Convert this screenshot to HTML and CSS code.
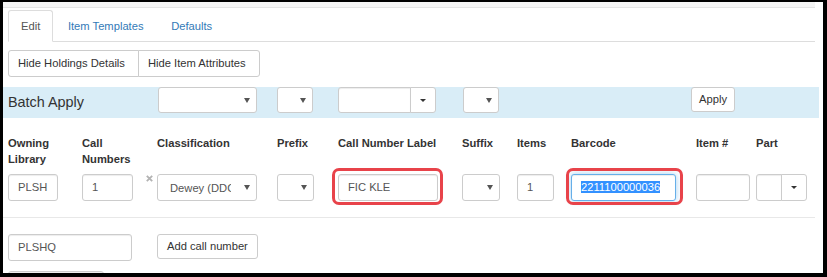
FILE: index.html
```html
<!DOCTYPE html>
<html lang="en">
<head>
<meta charset="utf-8">
<title>Holdings Editor</title>
<link rel="stylesheet" href="styles.css">
</head>
<body>
<div class="frame">
  <div class="topstrip"></div>
  <ul class="tabs">
    <li class="tab active">Edit</li>
    <li class="tab">Item Templates</li>
    <li class="tab">Defaults</li>
  </ul>
  <div class="btn-group">
    <button class="btn btn-first">Hide Holdings Details</button>
    <button class="btn btn-last">Hide Item Attributes</button>
  </div>

  <div class="grid batch">
    <div class="batch-label">Batch Apply</div>
    <div class="sel sel-batch w99 c3"></div>
    <div class="sel sel-batch w36 c4"></div>
    <div class="igroup c5">
      <div class="inp inp-batch w73 ig-left"></div>
      <div class="caret-btn cb-batch"><span class="caret"></span></div>
    </div>
    <div class="sel sel-batch w36 c6"></div>
    <button class="btn apply c9">Apply</button>
  </div>

  <div class="grid header">
    <div class="lbl">Owning Library</div>
    <div class="lbl">Call Numbers</div>
    <div class="lbl">Classification</div>
    <div class="lbl">Prefix</div>
    <div class="lbl">Call Number Label</div>
    <div class="lbl">Suffix</div>
    <div class="lbl">Items</div>
    <div class="lbl">Barcode</div>
    <div class="lbl">Item #</div>
    <div class="lbl">Part</div>
  </div>

  <div class="grid fields">
    <div class="inp w50">PLSH</div>
    <div class="callnum">
      <div class="inp w51">1</div>
      <svg class="remove" width="7" height="7" viewBox="0 0 7 7"><path d="M0.8 0.8L6.2 6.2M6.2 0.8L0.8 6.2" stroke="#b3b3b3" stroke-width="1.8" fill="none"/></svg>
    </div>
    <div class="sel w100"><span class="sel-text">Dewey (DDC)</span></div>
    <div class="sel w37"></div>
    <div class="hl hl-a"><div class="inp w100">FIC KLE</div></div>
    <div class="sel w38"></div>
    <div class="inp w37">1</div>
    <div class="hl hl-b"><div class="inp inp-focus w105"><span class="selected">2211100000036</span></div></div>
    <div class="inp w54"></div>
    <div class="igroup">
      <div class="inp w26 ig-left"></div>
      <div class="caret-btn"><span class="caret"></span></div>
    </div>
  </div>

  <div class="divider"></div>

  <div class="grid bottom">
    <div class="inp w124 span2">PLSHQ</div>
    <button class="btn add">Add call number</button>
  </div>
  <div class="grid last">
    <div class="inp w96 span2"></div>
  </div>
</div>
</body>
</html>
```
FILE: styles.css
```css
html, body {
  margin: 0;
  padding: 0;
}
body {
  background: #000;
  width: 827px;
  height: 277px;
  overflow: hidden;
  font-family: "Liberation Sans", Arial, sans-serif;
  font-size: 11.2px;
  line-height: 16px;
  color: #333;
}
.frame {
  margin: 2px 0 0 3px;
  width: 820px;
  height: 271px;
  background: #fff;
  overflow: hidden;
}
.topstrip {
  width: 812px;
  height: 5px;
  background: #f5f5f5;
  border-bottom: 1px solid #e4e4e4;
}
.tabs {
  display: flex;
  list-style: none;
  margin: 2px 0 0 5px;
  padding: 0;
  width: 807px;
  border-bottom: 1px solid #ddd;
}
.tab {
  margin: 0 1.6px -1px 0;
  padding: 7px 12px;
  line-height: 16px;
  border: 1px solid transparent;
  border-radius: 3px 3px 0 0;
  color: #337ab7;
}
.tab.active {
  color: #555;
  background: #fff;
  border-color: #ddd #ddd transparent;
}
.btn-group {
  display: flex;
  margin: 8px 0 0 5px;
}
.btn {
  box-sizing: border-box;
  height: 27px;
  margin: 0;
  padding: 0 13px 0 9px;
  border: 1px solid #ccc;
  border-radius: 3px;
  background: #fff;
  color: #333;
  font-family: inherit;
  font-size: 11.2px;
  line-height: 25px;
  white-space: nowrap;
}
.btn-first {
  border-radius: 3px 0 0 3px;
}
.btn-last {
  margin-left: -1px;
  border-radius: 0 3px 3px 0;
}
.grid {
  display: grid;
  grid-template-columns: 74px 75px 120px 61px 124px 55px 54px 125px 60px 59px;
  justify-items: start;
  padding-left: 5px;
}
.batch {
  margin-top: 10px;
  width: 811px;
  height: 31px;
  background: #d9edf7;
  align-items: start;
}
.batch-label {
  grid-column: 1 / 3;
  align-self: center;
  font-size: 14.4px;
  line-height: 31px;
  color: #333;
}
.c3 { grid-column: 3; margin-left: 1px; }
.c4 { grid-column: 4; }
.c5 { grid-column: 5; }
.c6 { grid-column: 6; margin-left: 1px; }
.c9 { grid-column: 9; margin-left: -5px; }
.apply {
  width: 44px;
  height: 25px;
  line-height: 23px;
  padding: 0;
  text-align: center;
}
.header {
  margin-top: 17px;
  align-items: start;
}
.lbl {
  font-weight: bold;
  padding-right: 8px;
  line-height: 16px;
  color: #333;
}
.fields {
  margin-top: 7px;
  align-items: start;
}
.inp {
  box-sizing: border-box;
  height: 27px;
  padding: 0 9px;
  border: 1px solid #ccc;
  border-radius: 3px;
  background: #fff;
  color: #555;
  line-height: 25px;
  white-space: nowrap;
  overflow: hidden;
  box-shadow: inset 0 1px 1px rgba(0, 0, 0, 0.075);
}
.inp-batch {
  height: 26px;
}
.inp-focus {
  border-color: #66afe9;
  box-shadow: inset 0 1px 1px rgba(0, 0, 0, 0.075), 0 0 6px rgba(102, 175, 233, 0.6);
}
.selected {
  background: #3391ff;
  color: #fff;
}
.sel {
  box-sizing: border-box;
  height: 27px;
  border: 1px solid #ccc;
  border-radius: 3px;
  background: #fff;
  display: flex;
  align-items: center;
  color: #555;
}
.sel-batch {
  height: 26px;
}
.sel::after {
  content: "";
  margin-left: auto;
  margin-right: 6px;
  border-left: 3px solid transparent;
  border-right: 3px solid transparent;
  border-top: 5px solid #555;
}
.sel-text {
  margin-left: 12px;
  width: 61px;
  overflow: hidden;
  white-space: nowrap;
}
.igroup {
  display: flex;
}
.ig-left {
  border-radius: 3px 0 0 3px;
}
.caret-btn {
  box-sizing: border-box;
  width: 26px;
  height: 27px;
  margin-left: -1px;
  border: 1px solid #ccc;
  border-radius: 0 3px 3px 0;
  background: #fff;
  display: flex;
  align-items: center;
  justify-content: center;
}
.cb-batch {
  height: 26px;
}
.caret {
  border-left: 3px solid transparent;
  border-right: 3px solid transparent;
  border-top: 3px solid #333;
}
.callnum {
  display: flex;
  justify-content: space-between;
  align-items: flex-start;
  width: 71px;
  padding-right: 4px;
}
.remove {
  display: block;
  margin-top: 1px;
}
.hl {
  position: relative;
}
.hl::after {
  content: "";
  position: absolute;
  top: -6px;
  bottom: -4px;
  border: 3px solid #e8434a;
  border-radius: 7px;
}
.hl-a::after {
  left: -6px;
  right: -5px;
}
.hl-b::after {
  left: -5px;
  right: -7px;
}
.w26 { width: 26px; }
.w36 { width: 36px; }
.w37 { width: 37px; }
.w38 { width: 38px; }
.w50 { width: 50px; }
.w51 { width: 51px; }
.w54 { width: 54px; }
.w73 { width: 73px; }
.w96 { width: 96px; }
.w99 { width: 99px; }
.w100 { width: 100px; }
.w105 { width: 105px; }
.w124 { width: 124px; }
.span2 { grid-column: 1 / 3; }
.divider {
  width: 812px;
  height: 1px;
  margin-top: 16px;
  background: #e8e8e8;
}
.bottom {
  margin-top: 16px;
  align-items: start;
}
.add {
  height: 25px;
  line-height: 23px;
  padding: 0 9px;
}
.last {
  margin-top: 10px;
}
```
